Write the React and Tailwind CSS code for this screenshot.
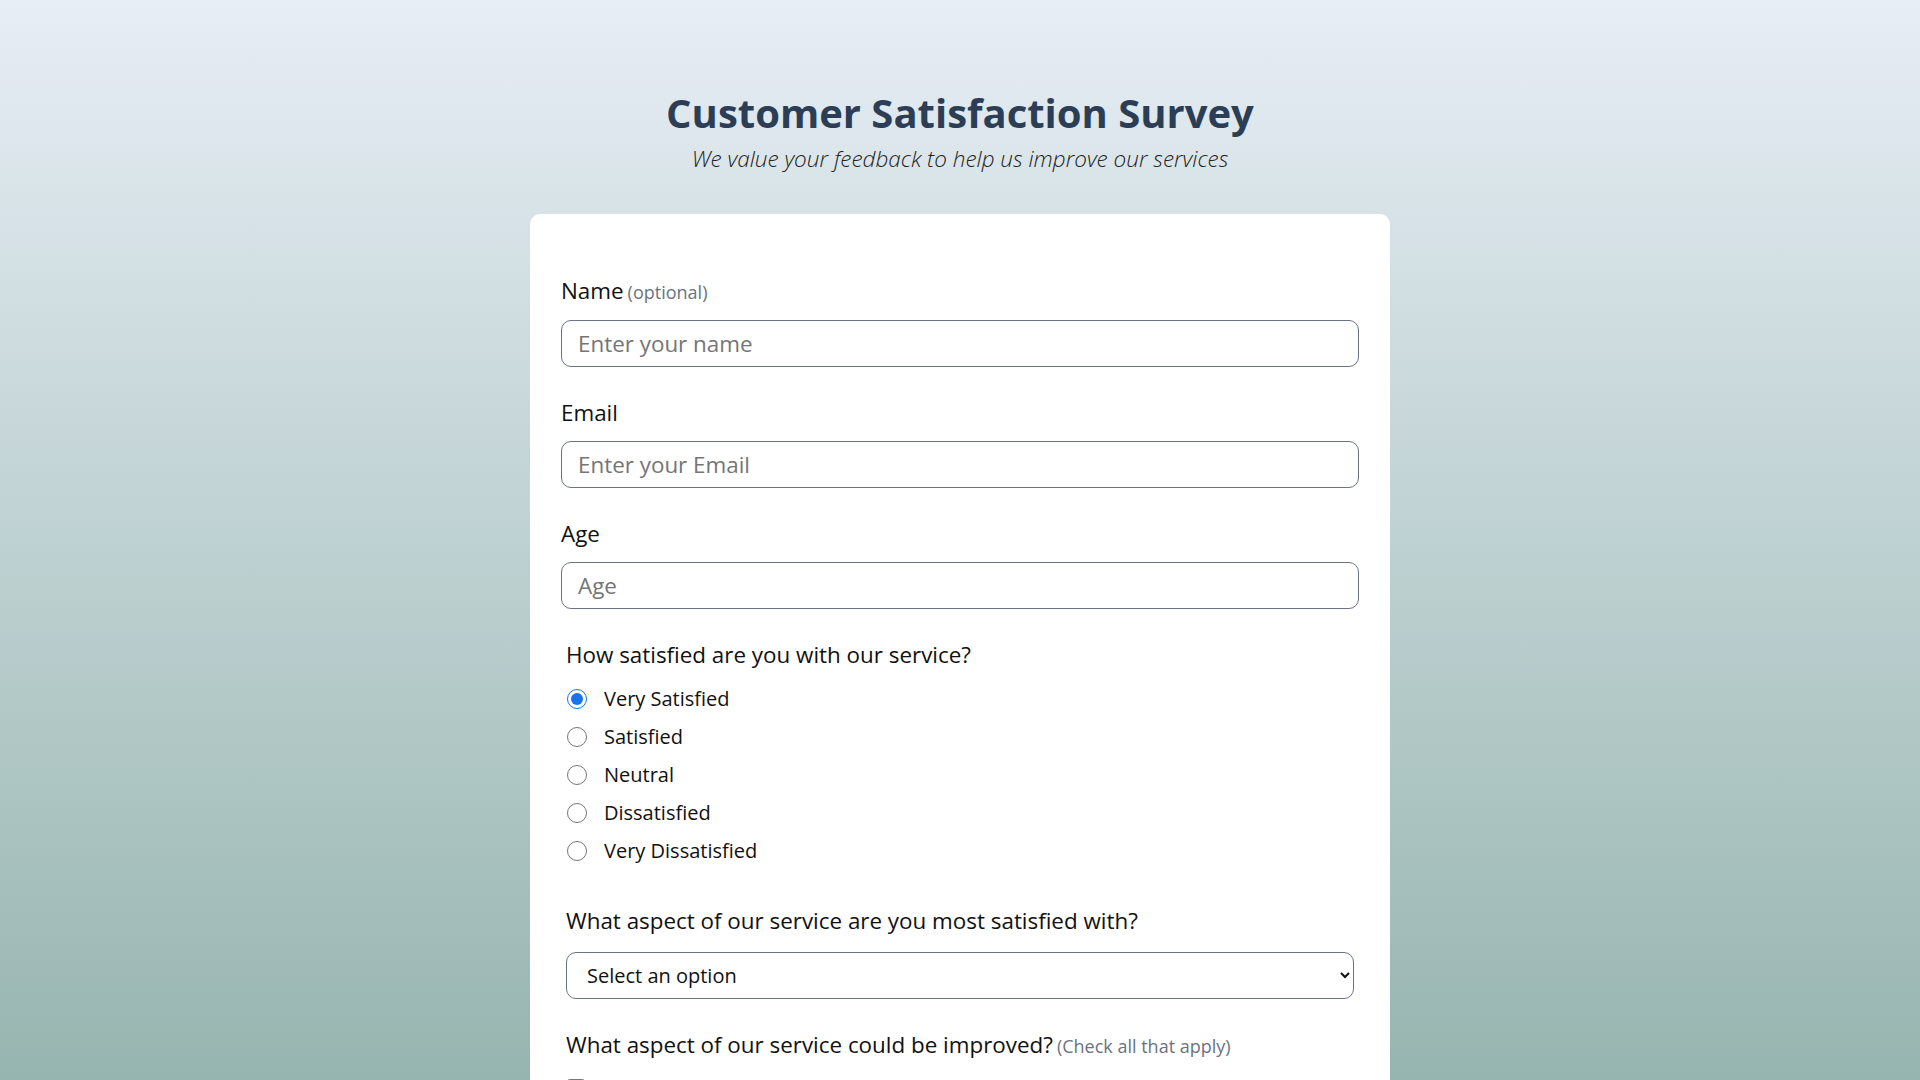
import React, { useState } from 'react';

const satisfaction = ['Very Satisfied', 'Satisfied', 'Neutral', 'Dissatisfied', 'Very Dissatisfied'];
const improvements = ['Customer Support', 'Product Quality', 'Pricing', 'Delivery Speed', 'Website Experience'];

function Field({ label, hint, placeholder, type = 'text' }) {
  return (
    <div className="mb-[31px]">
      <label className="block mb-[13px] text-[22.4px] leading-[30px] text-[#111]">
        {label}
        {hint && <span className="ml-1 text-[18px] text-[#6b7280]">{hint}</span>}
      </label>
      <input
        type={type}
        placeholder={placeholder}
        className="w-full h-[47px] px-4 text-[22.4px] rounded-[10px] border border-[#6b7280] bg-white text-[#111] placeholder:text-[#757575] outline-none"
      />
    </div>
  );
}

export default function App() {
  const [rating, setRating] = useState('Very Satisfied');

  return (
    <div className="min-h-screen bg-fixed bg-gradient-to-b from-[#e7eef5] to-[#97b5b0] pt-[89px] pb-16" style={{ fontFamily: '"Open Sans", "Noto Sans", sans-serif' }}>
      <h1 className="text-center text-[40px] leading-[48px] font-bold text-[#2c3e55]">Customer Satisfaction Survey</h1>
      <p className="text-center text-[22.5px] leading-[33px] mt-[5px] italic font-light text-[#222]">We value your feedback to help us improve our services</p>

      <form className="mx-auto mt-[39px] w-[860px] bg-white rounded-[10px] px-[31px] pt-[62px] pb-10">
        <Field label="Name" hint="(optional)" placeholder="Enter your name" />
        <Field label="Email" placeholder="Enter your Email" type="email" />
        <Field label="Age" placeholder="Age" type="number" />

        <div className="px-[5px]">
          <div className="text-[22.4px] leading-[30px] text-[#111]">How satisfied are you with our service?</div>
          <div className="mt-[14px] flex flex-col gap-[8px]">
            {satisfaction.map((s) => (
              <label key={s} className="flex items-center h-[30px] text-[20px] text-[#111]">
                <input
                  type="radio"
                  name="rating"
                  checked={rating === s}
                  onChange={() => setRating(s)}
                  className="w-5 h-5 ml-[1px] mr-[17px] accent-[#1a73e8]"
                />
                {s}
              </label>
            ))}
          </div>

          <div className="mt-[40px] text-[22.4px] leading-[30px] text-[#111]">What aspect of our service are you most satisfied with?</div>
          <select className="mt-[16px] w-full h-[47px] pl-4 pr-3 text-[20px] rounded-[10px] border border-[#6b7280] bg-white text-[#111] outline-none">
            <option>Select an option</option>
            <option>Customer Support</option>
            <option>Product Quality</option>
            <option>Pricing</option>
            <option>Delivery Speed</option>
          </select>

          <div className="mt-[31px] text-[22.4px] leading-[30px] text-[#111]">
            What aspect of our service could be improved?
            <span className="ml-1 text-[18px] text-[#6b7280]">(Check all that apply)</span>
          </div>
          <div className="mt-[12px] flex flex-col gap-[8px]">
            {improvements.map((s) => (
              <label key={s} className="flex items-center h-[30px] text-[20px] text-[#111]">
                <input type="checkbox" className="w-[18px] h-[18px] ml-[1px] mr-[18px] accent-[#1a73e8]" />
                {s}
              </label>
            ))}
          </div>

          <div className="mt-[32px] text-[22.4px] leading-[30px] text-[#111]">Any other comments or suggestions?</div>
          <textarea
            rows={4}
            placeholder="Enter your comments here..."
            className="mt-[14px] w-full px-4 py-3 text-[20px] rounded-[10px] border border-[#6b7280] bg-white outline-none placeholder:text-[#757575]"
          />
          <button type="button" className="mt-8 w-full h-[50px] rounded-[10px] bg-[#2c3e55] text-white text-[20px] font-semibold">Submit</button>
        </div>
      </form>
    </div>
  );
}
